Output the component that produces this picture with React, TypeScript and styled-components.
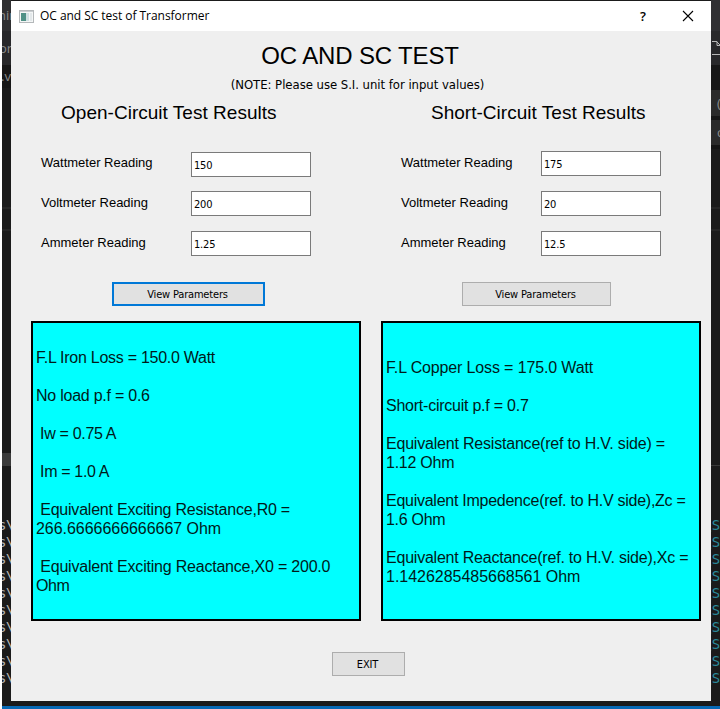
import React from "react";
import styled, { createGlobalStyle } from "styled-components";

const GlobalStyle = createGlobalStyle`
  * { box-sizing: border-box; }
  html, body { margin: 0; padding: 0; background: #fff; overflow: hidden; }
`;

const Desktop = styled.div`
  display: grid;
  grid-template: 706px 3px / 9px 700px 9px;
  width: 720px;
  height: 709px;
  padding-left: 2px;
  background: #fff;
  overflow: hidden;
  font-family: "Liberation Sans", Arial, sans-serif;
  color: #000;
`;

const StatusBar = styled.div`
  grid-column: 1 / -1;
  background: #0769b5;
`;

const Strip = styled.div`
  background: #1b1b1b;
  overflow: hidden;
  display: flex;
  flex-direction: column;
`;

const Band = styled.div<{ $h: number; $bg: string }>`
  flex: none;
  height: ${(p) => p.$h}px;
  background: ${(p) => p.$bg};
  overflow: hidden;
  display: flex;
  align-items: center;
  svg { display: block; flex: none; }
`;

const EditorText = styled.span<{ $shift?: number }>`
  flex: none;
  margin-left: ${(p) => p.$shift ?? 0}px;
  font: 13px/17px "Open Sans", sans-serif;
  color: #8d8d8d;
`;

const PathLine = styled.div<{ $color: string; $shift: number }>`
  flex: none;
  height: 17px;
  margin-left: ${(p) => p.$shift}px;
  font: 14px/17px "DejaVu Sans Mono", monospace;
  letter-spacing: -0.7px;
  white-space: nowrap;
  color: ${(p) => p.$color};
`;

const WindowColumn = styled.div`
  background: #1b1b1b;
  padding: 1px 0 5px;
`;

const Dialog = styled.div`
  height: 700px;
  background: #efefef;
  display: flex;
  flex-direction: column;
`;

const TitleBar = styled.header`
  display: flex;
  align-items: center;
  height: 30px;
  flex: none;
  padding: 0 17px 0 8px;
  background: #fff;
  svg { display: block; flex: none; }
`;

const Caption = styled.span`
  flex: 1;
  margin-left: 6px;
  font: 12px/16px "Open Sans", sans-serif;
  letter-spacing: -0.04px;
`;

const HelpGlyph = styled.span`
  width: 10px;
  margin-right: 34px;
  text-align: center;
  font: 600 13px/16px "Open Sans", sans-serif;
`;

const Heading = styled.h1`
  margin: 9px 0 0;
  padding-right: 2px;
  text-align: center;
  font-size: 24px;
  font-weight: 400;
  line-height: 32px;
  letter-spacing: -0.15px;
`;

const Note = styled.p`
  margin: 4px 0 0;
  padding-right: 7px;
  text-align: center;
  font: 13px/18px "DejaVu Sans Condensed", "DejaVu Sans", sans-serif;
  font-stretch: condensed;
  letter-spacing: -0.04px;
`;

const Columns = styled.main`
  display: grid;
  grid-template-columns: 330px 320px;
  column-gap: 20px;
  padding: 7px 0 0 20px;
`;

const TestColumn = styled.section`
  display: flex;
  flex-direction: column;
`;

const TestTitle = styled.h2<{ $indent: number }>`
  margin: 0 0 0 ${(p) => p.$indent}px;
  font-size: 19px;
  font-weight: 400;
  line-height: 24px;
  letter-spacing: 0.02px;
  white-space: nowrap;
`;

const Fields = styled.div<{ $inputX: number; $indent: number }>`
  display: grid;
  grid-template-columns: ${(p) => p.$inputX}px 120px;
  grid-auto-rows: 40px;
  margin: 15px 0 0 ${(p) => p.$indent}px;
`;

const Label = styled.label`
  padding-top: 13px;
  font-size: 13px;
  line-height: 20px;
`;

const Input = styled.input<{ $top: number }>`
  width: 120px;
  height: 25px;
  margin: ${(p) => p.$top}px 0 0;
  padding: 1px 2px 0;
  border: 1px solid #7a7a7a;
  border-radius: 0;
  outline: none;
  background: #fff;
  color: #000;
  font: 11px/14px "DejaVu Sans Condensed", "DejaVu Sans", sans-serif;
  font-stretch: condensed;
  letter-spacing: -0.2px;
`;

const Button = styled.button<{ $w: number; $focused?: boolean }>`
  width: ${(p) => p.$w}px;
  height: 24px;
  padding: 1px 2px 0 0;
  border: ${(p) => (p.$focused ? "2px solid #0078d7" : "1px solid #adadad")};
  border-radius: 0;
  background: #e1e1e1;
  color: #000;
  font: 11px/14px "DejaVu Sans Condensed", "DejaVu Sans", sans-serif;
  font-stretch: condensed;
  letter-spacing: -0.18px;
`;

const ActionRow = styled.div<{ $indent: number }>`
  display: flex;
  height: 24px;
  margin: 22px 0 15px ${(p) => p.$indent}px;
`;

const Results = styled.div<{ $offset: number }>`
  display: flex;
  flex-direction: column;
  justify-content: center;
  height: 300px;
  padding: ${(p) => p.$offset}px 0 0 3px;
  border: 2px solid #000;
  background: #00ffff;
  color: #001a1a;
`;

const ResultLine = styled.div<{ $ls?: number }>`
  height: 19px;
  font-size: 16px;
  line-height: 19px;
  white-space: pre;
  letter-spacing: ${(p) => p.$ls ?? 0}px;
`;

const Footer = styled.footer`
  margin: 31px 0 0 321px;
  display: flex;
`;

type Line = [text: string, spacing?: number];

interface Test {
  title: string;
  titleIndent: number;
  inputX: number;
  fieldsIndent: number;
  fields: [name: string, value: string, top: number][];
  buttonWidth: number;
  buttonIndent: number;
  focused: boolean;
  resultOffset: number;
  lines: Line[];
}

const tests: Test[] = [
  {
    title: "Open-Circuit Test Results",
    titleIndent: 30,
    inputX: 150,
    fieldsIndent: 10,
    fields: [
      ["Wattmeter Reading", "150", 12],
      ["Voltmeter Reading", "200", 11],
      ["Ammeter Reading", "1.25", 11],
    ],
    buttonWidth: 153,
    buttonIndent: 81,
    focused: true,
    resultOffset: 0,
    lines: [
      ["F.L Iron Loss = 150.0 Watt", -0.27],
      [""],
      ["No load p.f = 0.6", -0.24],
      [""],
      [" Iw = 0.75 A", -0.33],
      [""],
      [" Im = 1.0 A", -0.35],
      [""],
      [" Equivalent Exciting Resistance,R0 =", -0.22],
      ["266.6666666666667 Ohm", -0.04],
      [""],
      [" Equivalent Exciting Reactance,X0 = 200.0", -0.21],
      ["Ohm", -0.4],
    ],
  },
  {
    title: "Short-Circuit Test Results",
    titleIndent: 50,
    inputX: 140,
    fieldsIndent: 20,
    fields: [
      ["Wattmeter Reading", "175", 11],
      ["Voltmeter Reading", "20", 11],
      ["Ammeter Reading", "12.5", 11],
    ],
    buttonWidth: 149,
    buttonIndent: 81,
    focused: false,
    resultOffset: 2,
    lines: [
      ["F.L Copper Loss = 175.0 Watt", -0.14],
      [""],
      ["Short-circuit p.f = 0.7", -0.24],
      [""],
      ["Equivalent Resistance(ref to H.V. side) =", -0.2],
      ["1.12 Ohm", -0.25],
      [""],
      ["Equivalent Impedence(ref. to H.V side),Zc =", -0.26],
      ["1.6 Ohm", -0.28],
      [""],
      ["Equivalent Reactance(ref. to H.V. side),Xc =", -0.22],
      ["1.1426285485668561 Ohm", -0.02],
    ],
  },
];

const rows = Array.from({ length: 10 }, (_, i) => i);

const AppIcon = () => (
  <svg width="15" height="13" viewBox="0 0 15 13">
    <rect x="0.5" y="0.5" width="14" height="12" fill="#f4f6f6" stroke="#b4b8ba" />
    <path d="M1 1.5h13" stroke="#c9cdd0" />
    <rect x="2" y="3" width="5" height="8" fill="#4f9186" />
    <rect x="7" y="3" width="3" height="8" fill="#cfe0e2" />
    <rect x="11" y="3" width="2" height="8" fill="#e3e8ea" />
  </svg>
);

const CloseIcon = () => (
  <svg width="12" height="12" viewBox="0 0 12 12">
    <path d="M1 1L11 11M11 1L1 11" stroke="#000" strokeWidth="1.1" fill="none" />
  </svg>
);

const TestPanel = ({ test }: { test: Test }) => (
  <TestColumn>
    <TestTitle $indent={test.titleIndent}>{test.title}</TestTitle>
    <Fields $inputX={test.inputX} $indent={test.fieldsIndent}>
      {test.fields.map(([name, value, top]) => (
        <React.Fragment key={name}>
          <Label>{name}</Label>
          <Input $top={top} defaultValue={value} aria-label={name} />
        </React.Fragment>
      ))}
    </Fields>
    <ActionRow $indent={test.buttonIndent}>
      <Button $w={test.buttonWidth} $focused={test.focused}>View Parameters</Button>
    </ActionRow>
    <Results $offset={test.resultOffset}>
      {test.lines.map(([text, ls], i) => (
        <ResultLine key={i} $ls={ls}>{text}</ResultLine>
      ))}
    </Results>
  </TestColumn>
);

export default function App() {
  return (
    <>
      <GlobalStyle />
      <Desktop>
        <Strip>
          <Band $h={31} $bg="#2f2f31"><EditorText $shift={-4}>nin</EditorText></Band>
          <Band $h={34} $bg="#28282a"><EditorText $shift={-3}>ori</EditorText></Band>
          <Band $h={23} $bg="#171717"><EditorText $shift={-1}>.v</EditorText></Band>
          <Band $h={119} $bg="#1b1b1b" />
          <Band $h={2} $bg="#262626" />
          <Band $h={20} $bg="#1b1b1b" />
          <Band $h={2} $bg="#262626" />
          <Band $h={222} $bg="#1b1b1b" />
          <Band $h={13} $bg="#3b3b3b" />
          <Band $h={51} $bg="#1b1b1b" />
          {rows.map((i) => (
            <PathLine key={i} $color="#b5b5b5" $shift={-4}>s\</PathLine>
          ))}
        </Strip>
        <WindowColumn>
          <Dialog>
            <TitleBar>
              <AppIcon />
              <Caption>OC and SC test of Transformer</Caption>
              <HelpGlyph>?</HelpGlyph>
              <CloseIcon />
            </TitleBar>
            <Heading>OC AND SC TEST</Heading>
            <Note>(NOTE: Please use S.I. unit for input values)</Note>
            <Columns>
              {tests.map((t) => <TestPanel key={t.title} test={t} />)}
            </Columns>
            <Footer><Button $w={73}>EXIT</Button></Footer>
          </Dialog>
        </WindowColumn>
        <Strip>
          <Band $h={31} $bg="#303033" />
          <Band $h={34} $bg="#29292b">
            <svg width="9" height="34" viewBox="0 0 9 34">
              <path d="M1 10.5h5v4h3M6 11l3 3M1 23.5h8" fill="none" stroke="#b9b9b9" />
            </svg>
          </Band>
          <Band $h={25} $bg="#171717" />
          <Band $h={26} $bg="#2b2b2b"><EditorText $shift={6}>(</EditorText></Band>
          <Band $h={4} $bg="#171717" />
          <Band $h={25} $bg="#2b2b2b"><EditorText $shift={6}>c</EditorText></Band>
          <Band $h={4} $bg="#151515" />
          <Band $h={58} $bg="#1b1b1b" />
          <Band $h={2} $bg="#262626" />
          <Band $h={20} $bg="#1b1b1b" />
          <Band $h={2} $bg="#262626" />
          <Band $h={234} $bg="#1b1b1b" />
          <Band $h={1} $bg="#3a3a3a" />
          <Band $h={51} $bg="#1b1b1b" />
          {rows.map((i) => (
            <PathLine key={i} $color="#2a8a9c" $shift={-7}>\S</PathLine>
          ))}
        </Strip>
        <StatusBar />
      </Desktop>
    </>
  );
}
